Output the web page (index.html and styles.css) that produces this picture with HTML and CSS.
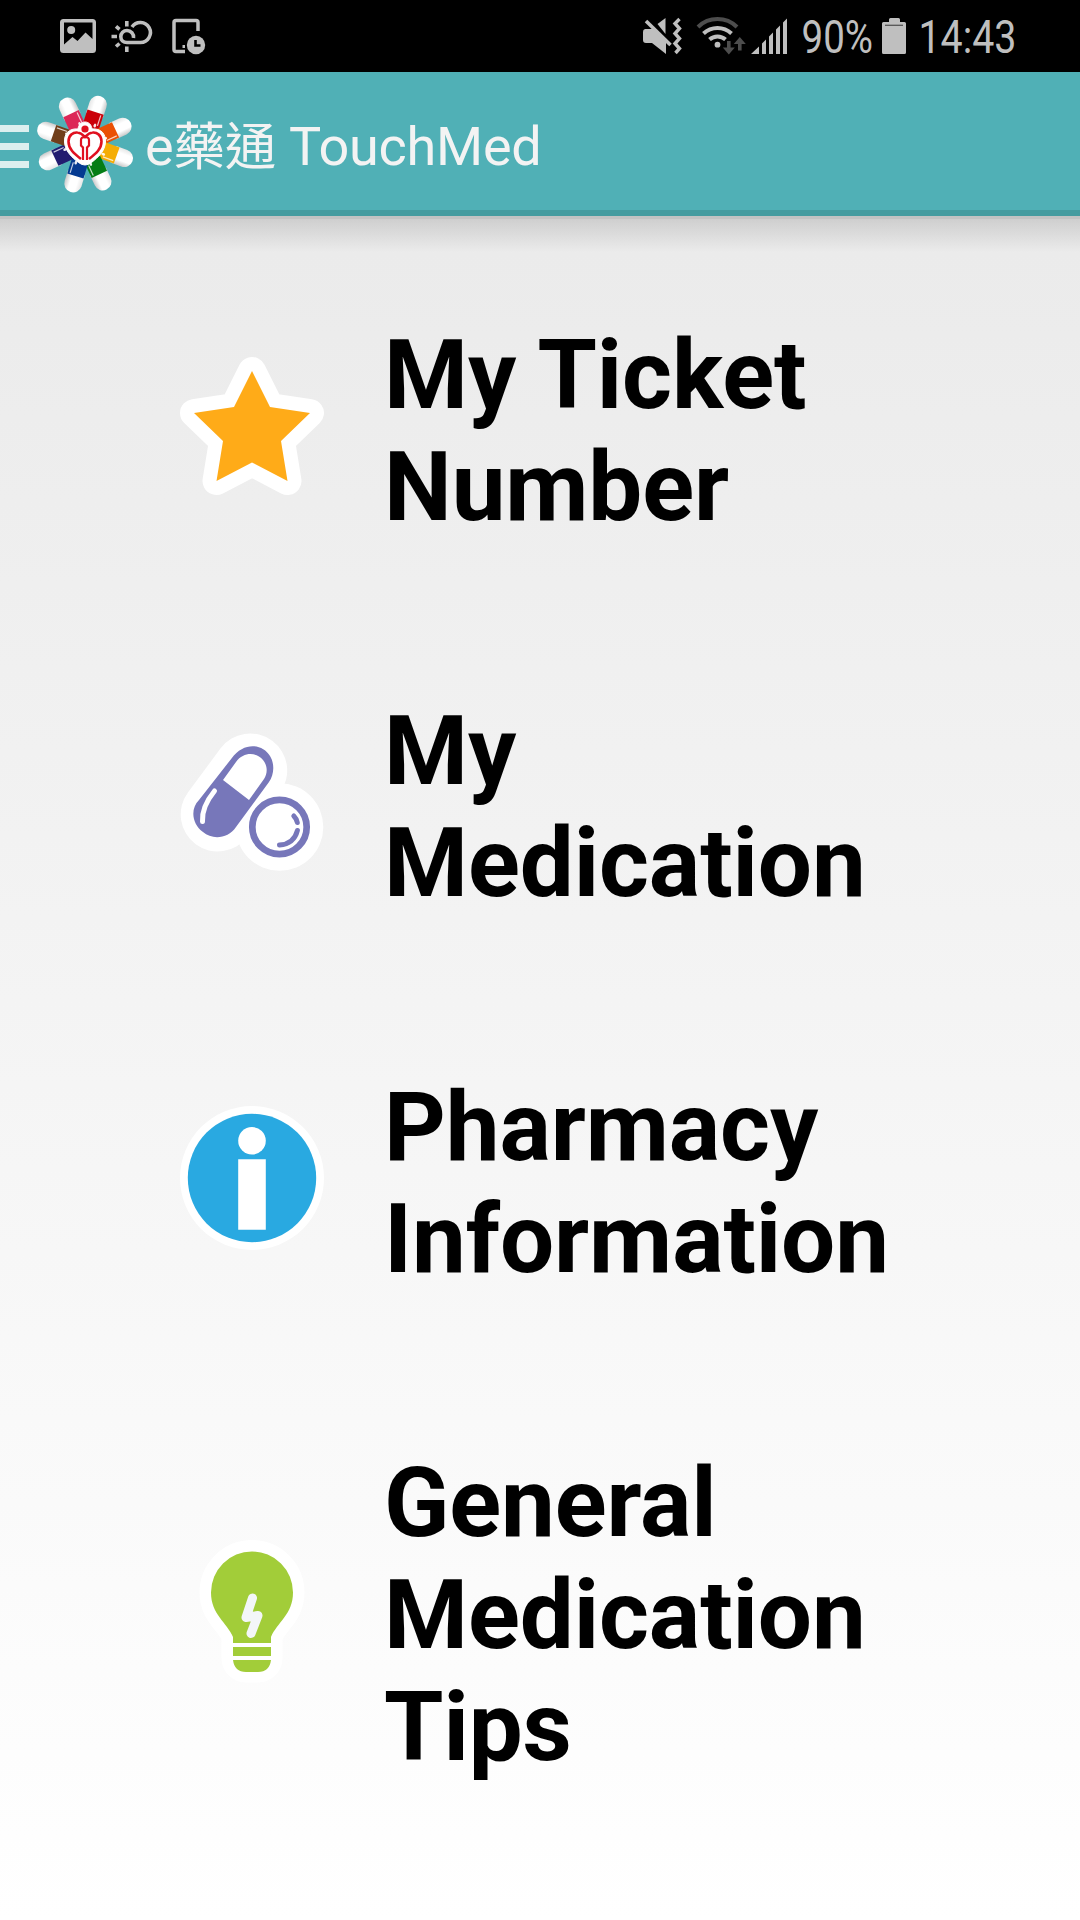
FILE: index.html
```html
<!DOCTYPE html>
<html lang="en">
<head>
<meta charset="utf-8">
<title>e藥通 TouchMed</title>
<link rel="stylesheet" href="styles.css">
</head>
<body>
<div class="status">
  <svg class="status-svg" width="1080" height="72" viewBox="0 0 1080 72">
    <g fill="#bfbfbf">
      <path fill-rule="evenodd" d="M63.500 19h29a3.500 3.500 0 0 1 3.500 3.500v27a3.500 3.500 0 0 1-3.500 3.500h-29a3.500 3.500 0 0 1-3.500-3.500v-27a3.500 3.500 0 0 1 3.500-3.500zM64 22.500v22l8.500-7.500 5 4 8-8.500 7 6.500v-16.500z"/>
      <circle cx="71.200" cy="30" r="4"/>
    </g>
    <g fill="none" stroke="#bfbfbf" stroke-width="3.600">
      <path d="M133.500 38c.5-4-2.500-7.500-6.500-7.500a6.200 6.200 0 0 0-6.200 6.200c0 3.500 2.500 5.800 6.200 5.800H140.500a10 10 0 1 0-8.500-15.500"/>
      <path d="M126.800 21v5.500M126.800 46.500v5.500M111.500 36.500h5.500M116 26.300l3.500 3M116 46.500l3.500-3"/>
      <path d="M198 31V22.500a2 2 0 0 0-2-2h-20a2 2 0 0 0-2 2v27a2 2 0 0 0 2 2h9" stroke-width="3.500"/>
    </g>
    <circle cx="196" cy="45" r="9.200" fill="#bfbfbf"/>
    <path d="M195.500 40v5.500h5" fill="none" stroke="#000" stroke-width="2.600"/>
    <path d="M182.500 45h2.500v3h-2.500z" fill="#bfbfbf"/>
    <path fill="#bfbfbf" d="M657.500 24l8-6v16z"/>
    <path fill="#bfbfbf" d="M645 29h9l12 12v13l-14-11h-6a3 3 0 0 1-3-3v-8a3 3 0 0 1 2-3z"/>
    <path d="M646 21l24.500 24" stroke="#bfbfbf" stroke-width="3.600"/>
    <path d="M679.500 19l-4.500 4.500 4.500 5-4.500 5 4.500 5-4.500 5 4.500 5-4 4.500" fill="none" stroke="#bfbfbf" stroke-width="3.400"/>
    <g fill="none" stroke="#bfbfbf" stroke-width="4">
      <path d="M698 27a28 28 0 0 1 39 0" stroke="#4d4d4d"/>
      <path d="M703.500 33.500a20.500 20.500 0 0 1 28 0"/>
      <path d="M709.500 39.500a12 12 0 0 1 16 0"/>
    </g>
    <circle cx="717.500" cy="44.700" r="2.900" fill="#bfbfbf"/>
    <path fill="#4d4d4d" d="M727 41h3.600v6.500h4.200l-6 7-6-7h4.200zM738 50.500h3.600v-6.500h4.200l-6-7-6 7h4.200z"/>
    <path fill="#bfbfbf" d="M751 54l8-7.500v7.500zM762 54v-10.500l4-4v14.500zM769 54v-17.500l4-4v21.500zM776 54v-24.500l4-4v28.500zM783 54v-31.500l4-4v35.500z"/>
    <path fill="#bfbfbf" d="M883.500 22h5.500v-2.500a1.500 1.500 0 0 1 1.500-1.500h8a1.500 1.500 0 0 1 1.500 1.500v2.500h4.500a1.500 1.500 0 0 1 1.500 1.500v29a1.500 1.500 0 0 1-1.500 1.500h-21a1.500 1.500 0 0 1-1.500-1.500v-29a1.500 1.500 0 0 1 1.500-1.500z"/>
    <path d="M885 25.300h18" stroke="#555" stroke-width="1.300"/>
    <text class="status-text" x="801.500" y="53" textLength="71.500" lengthAdjust="spacingAndGlyphs">90%</text>
    <text class="status-text" x="918.500" y="53" textLength="98" lengthAdjust="spacingAndGlyphs">14:43</text>
  </svg>
</div>
<header class="bar">
  <div class="menu"><i></i><i></i><i></i></div>
  <svg class="logo" viewBox="0 0 96 96">
    <defs>
      <linearGradient id="shell" x1="0" x2="1" y1="0" y2="0">
        <stop offset="0" stop-color="#e6e6e6"/><stop offset=".3" stop-color="#fff"/><stop offset=".7" stop-color="#fff"/><stop offset="1" stop-color="#c9c9c9"/>
      </linearGradient>
      <g id="pill">
        <path d="M-8.800 -30V-41.500a8.800 8.800 0 0 1 17.600 0V-30z" fill="url(#shell)"/>
        <path d="M-8.500 -33.500H8.500V-17H-8.500z"/>
        <path d="M6 -32V-21" stroke="#fff" stroke-width="1.200" opacity=".75"/>
        <ellipse cx="3.500" cy="-20.500" rx="1.300" ry="2" fill="#fff" opacity=".9"/>
      </g>
    </defs>
    <g transform="translate(48.200 48)">
      <use href="#pill" fill="#cb0009" transform="rotate(18)"/>
      <use href="#pill" fill="#ea5004" transform="rotate(65)"/>
      <use href="#pill" fill="#f5ad05" transform="rotate(110)"/>
      <use href="#pill" fill="#057d15" transform="rotate(155)"/>
      <use href="#pill" fill="#043a91" transform="rotate(197)"/>
      <use href="#pill" fill="#221c70" transform="rotate(245)"/>
      <use href="#pill" fill="#713f1b" transform="rotate(289)"/>
      <use href="#pill" fill="#dc2757" transform="rotate(335)"/>
    </g>
    <path d="M48 26c4 0 6.500 3 7 7 9-1 14 5 13.500 13-.5 9-7 15-14 20.500q-6.500 5-13 0c-7-5.500-13.500-11.500-14-20.500-.5-8 4.500-14 13.500-13 .5-4 3-7 7-7z" fill="#fff" stroke="#fff"/>
    <circle cx="48" cy="33" r="3.600" fill="#e01020"/>
    <g fill="none" stroke="#e01020" stroke-width="2.600">
      <path d="M44 63C37 57.500 31.500 53 31.500 45.500c0-6 4.500-9.500 9-9 3.500.3 5.500 2.500 7.500 4.500 2-2 4-4.200 7.500-4.500 4.500-.5 9 3 9 9C64.500 53 59 57.500 52 63"/>
      <path d="M46 64V51.500l-2-2V44q0-3 4-3t4 3v5.500l-2 2V64" stroke-width="2.200"/>
    </g>
  </svg>
  <h1 class="title">e<span class="cjk">藥通</span> TouchMed</h1>
</header>
<main class="list">
  <a class="row">
    <svg class="icon" viewBox="0 0 144 144">
      <path d="M72 17l18 36 40 6-29 28 6.500 40L72 108.500 36.500 127 43 87 14 59l40-6z" fill="#fff" stroke="#fff" stroke-width="28" stroke-linejoin="round"/>
      <path d="M72 17l18 36 40 6-29 28 6.500 40L72 108.500 36.500 127 43 87 14 59l40-6z" fill="#ffab18"/>
    </svg>
    <span class="label">My Ticket<br>Number</span>
  </a>
  <a class="row">
    <svg class="icon" viewBox="0 0 144 144">
      <path d="M37.700 84.500L70.200 40.500" stroke="#fff" stroke-width="74" stroke-linecap="round"/>
      <circle cx="99.500" cy="97" r="43.800" fill="#fff"/>
      <path d="M51.500 28.500C64 11 83 14 90 26c5 8 4 19-1 26L56 97C48 109 32 110 23 102 12 94 10 79 19 70z" fill="#7777ba"/>
      <path d="M43 50L56 32c8-11 21-9.500 27-2 5 6 4.500 13.500 1 19L69 70z" fill="#fff"/>
      <path d="M34.500 61Q21.500 77 22.500 91.500" fill="none" stroke="#fff" stroke-width="5" stroke-linecap="round"/>
      <circle cx="99.500" cy="97" r="31" fill="#fff"/>
      <circle cx="99.500" cy="97" r="27.200" fill="#fff" stroke="#7777ba" stroke-width="6.700"/>
      <path d="M113.800 86q3 3 3.500 6.500M117.400 100.500Q114 114 99.500 115" fill="none" stroke="#7777ba" stroke-width="5" stroke-linecap="round"/>
    </svg>
    <span class="label">My<br>Medication</span>
  </a>
  <a class="row">
    <svg class="icon" viewBox="0 0 144 144">
      <circle cx="72" cy="72" r="72" fill="#fff"/>
      <circle cx="72" cy="72" r="64.200" fill="#29a9e1"/>
      <circle cx="72" cy="34.800" r="13.800" fill="#fff"/>
      <path d="M58.200 53.200h27.600v70.500H58.200z" fill="#fff"/>
    </svg>
    <span class="label">Pharmacy<br>Information</span>
  </a>
  <a class="row">
    <svg class="icon" viewBox="0 0 144 144">
      <path d="M72 13.500a41 41 0 0 1 41 41c0 22-16 30-22 44.500V120a13 13 0 0 1-13 13H66a13 13 0 0 1-13-13V99C47 84.500 31 76.500 31 54.500a41 41 0 0 1 41-41z" fill="#fff" stroke="#fff" stroke-width="23" stroke-linejoin="round"/>
      <path d="M72 13.500a41 41 0 0 1 41 41c0 22-16 30-22 44.500V105H53V99C47 84.500 31 76.500 31 54.500a41 41 0 0 1 41-41zM53 109h38v9H53zM53 122h38q-1.500 12-13 12H66q-11.500 0-13-12z" fill="#a2cd39"/>
      <path d="M72.500 60L66 79.500 78 77.500 71 95.500" fill="none" stroke="#f3f6f8" stroke-width="9" stroke-linecap="round" stroke-linejoin="round"/>
    </svg>
    <span class="label">General<br>Medication<br>Tips</span>
  </a>
</main>
</body>
</html>
```
FILE: styles.css
```css
* { box-sizing: border-box; }

body {
  margin: 0;
  height: 1920px;
  overflow: hidden;
  display: flex;
  flex-direction: column;
  font-family: Roboto, "Noto Sans CJK TC", sans-serif;
  background: linear-gradient(#e8e8e8, #ffffff);
}

.status { height: 72px; flex: none; background: #000; }
.status-svg { display: block; }
.status-text { font-size: 46px; fill: #bfbfbf; }

.bar {
  height: 144px;
  flex: none;
  display: flex;
  align-items: center;
  background: #50b0b6;
  border-bottom: 6px solid #459ca0;
}

.menu { width: 29px; display: flex; flex-direction: column; gap: 11px; margin: 11px 8px 0 0; }
.menu i { height: 7px; background: #dcefef; }

.logo { width: 96px; height: 96px; flex: none; margin-top: 5px; overflow: visible; }

.title {
  margin: 12px 0 0 12px;
  font-size: 54px;
  font-weight: 400;
  letter-spacing: -.25px;
  line-height: 64px;
  white-space: nowrap;
  color: #f3f3f3;
}
.cjk { font-family: "Noto Sans CJK TC", sans-serif; font-size: 51.5px; line-height: 1; }

.list {
  flex: 1;
  display: flex;
  flex-direction: column;
  gap: 152px;
  padding: 103px 0 0 180px;
  background: linear-gradient(#c3c3c3 0 3px, rgba(195, 195, 195, .7) 3px, rgba(215, 215, 215, 0) 36px) top / 100% 40px no-repeat;
}

.row { display: flex; align-items: center; gap: 60px; }
.icon { width: 144px; height: 144px; flex: none; margin-bottom: 11px; overflow: visible; }
.label { font-size: 96px; font-weight: 700; letter-spacing: -.1px; line-height: 112px; color: #000; }
```
